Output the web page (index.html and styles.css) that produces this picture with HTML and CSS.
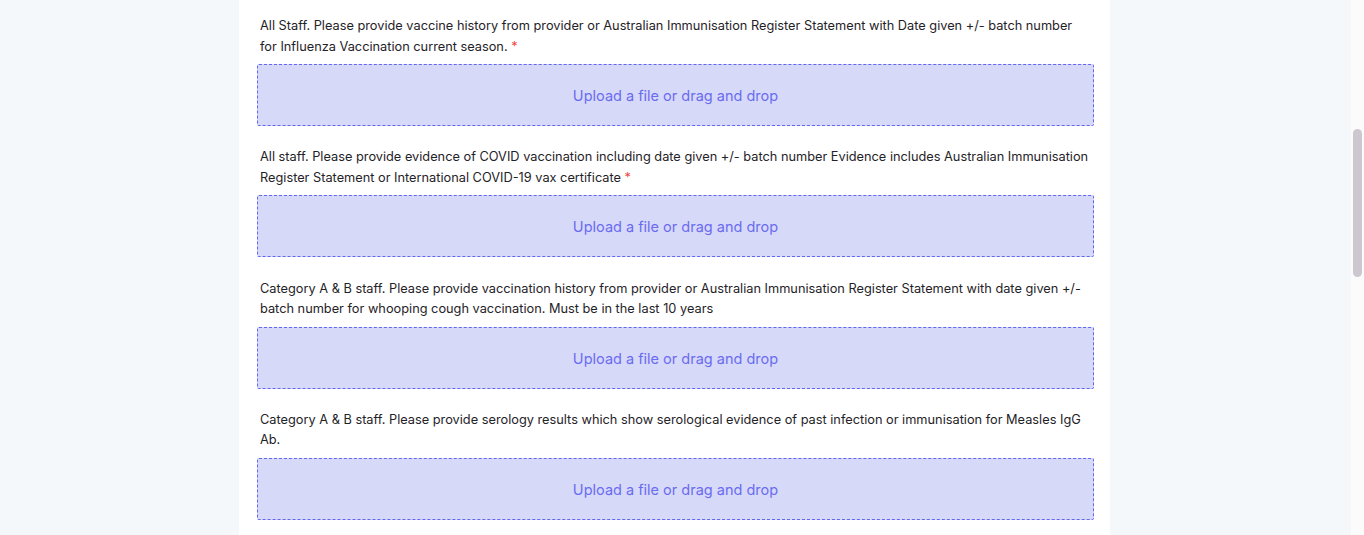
FILE: index.html
```html
<!DOCTYPE html>
<html lang="en">
<head>
<meta charset="utf-8">
<title>Vaccination uploads</title>
<link rel="stylesheet" href="styles.css">
</head>
<body>
<main class="page">
  <section class="card">
    <div class="field">
      <label class="label">All Staff. Please provide vaccine history from provider or Australian Immunisation Register Statement with Date given +/- batch number for Influenza Vaccination current season. <span class="req">*</span></label>
      <div class="drop">Upload a file or drag and drop</div>
    </div>
    <div class="field">
      <label class="label">All staff. Please provide evidence of COVID vaccination including date given +/- batch number Evidence includes Australian Immunisation Register Statement or International COVID-19 vax certificate <span class="req">*</span></label>
      <div class="drop">Upload a file or drag and drop</div>
    </div>
    <div class="field">
      <label class="label">Category A &amp; B staff. Please provide vaccination history from provider or Australian Immunisation Register Statement with date given +/- batch number for whooping cough vaccination. Must be in the last 10 years</label>
      <div class="drop">Upload a file or drag and drop</div>
    </div>
    <div class="field">
      <label class="label">Category A &amp; B staff. Please provide serology results which show serological evidence of past infection or immunisation for Measles IgG Ab.</label>
      <div class="drop">Upload a file or drag and drop</div>
    </div>
  </section>
</main>
<div class="scrollbar"><div class="thumb"></div></div>
</body>
</html>
```
FILE: styles.css
```css
html, body {
  margin: 0;
  padding: 0;
  height: 100%;
  overflow: hidden;
}
body {
  background: #f5f8fb;
  font-family: Inter, "Noto Sans", sans-serif;
  color: #1f2328;
}
.page {
  display: flex;
  justify-content: flex-start;
  padding-left: 239px;
  padding-right: 253px;
}
.card {
  width: 871px;
  min-height: 535px;
  background: #ffffff;
  box-sizing: border-box;
  padding: 15px 16px 0 18px;
  display: flex;
  flex-direction: column;
  gap: 20.3px;
}
.field {
  display: flex;
  flex-direction: column;
  gap: 7px;
}
.label {
  display: block;
  font-size: 12.77px;
  line-height: 20.5px;
  padding: 1px 4px 0 3px;
  color: #1f2328;
}
.req {
  color: #ef4444;
}
.drop {
  border: 1px dashed #6366f1;
  border-radius: 2px;
  background: #d7d9f9;
  display: flex;
  align-items: center;
  justify-content: center;
  padding-top: 1px;
  box-sizing: content-box;
  height: 59px;
  font-size: 14.5px;
  color: #6a6cf0;
}
.scrollbar {
  position: fixed;
  top: 0;
  right: 0;
  width: 13px;
  height: 100%;
  background: #fbfbfc;
}
.thumb {
  position: absolute;
  top: 129px;
  left: 2px;
  width: 9px;
  height: 148px;
  border-radius: 5px;
  background: #cdc8cf;
}
```
